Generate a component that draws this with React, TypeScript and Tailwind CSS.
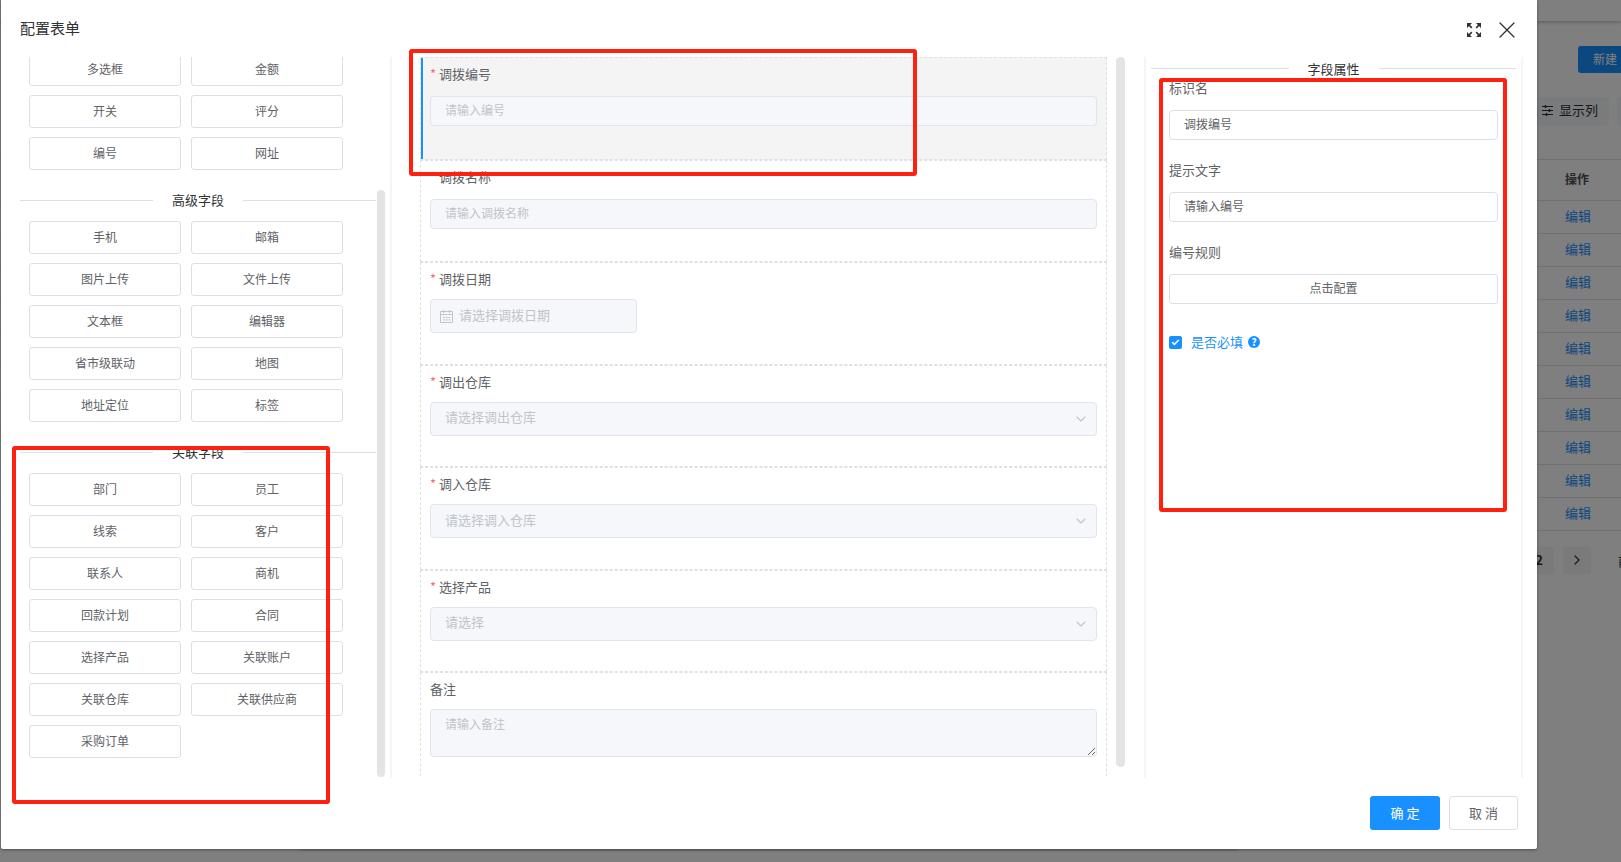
import React from "react";
import { Check, ChevronDown, ChevronRight, X } from "lucide-react";

const basicFields = ["多选框", "金额", "开关", "评分", "编号", "网址"];
const advancedFields = ["手机", "邮箱", "图片上传", "文件上传", "文本框", "编辑器", "省市级联动", "地图", "地址定位", "标签"];
const relatedFields = [
  "部门", "员工", "线索", "客户", "联系人", "商机", "回款计划", "合同",
  "选择产品", "关联账户", "关联仓库", "关联供应商", "采购订单",
];

type Field = { id: string; label: string; kind: "text" | "date" | "select"; placeholder: string; active?: boolean };

const formFields: Field[] = [
  { id: "code", label: "调拨编号", kind: "text", placeholder: "请输入编号", active: true },
  { id: "name", label: "调拨名称", kind: "text", placeholder: "请输入调拨名称" },
  { id: "date", label: "调拨日期", kind: "date", placeholder: "请选择调拨日期" },
  { id: "from", label: "调出仓库", kind: "select", placeholder: "请选择调出仓库" },
  { id: "to", label: "调入仓库", kind: "select", placeholder: "请选择调入仓库" },
  { id: "product", label: "选择产品", kind: "select", placeholder: "请选择" },
];

function Divider({ title, className }: { title: string; className: string }) {
  return (
    <div className={`flex items-center ${className}`}>
      <span className="h-px flex-1 bg-[#dcdfe6]" />
      <h2 className="px-[19px] text-[13px] leading-5 text-[#303133]">{title}</h2>
      <span className="h-px flex-1 bg-[#dcdfe6]" />
    </div>
  );
}

function FieldGrid({ items }: { items: string[] }) {
  return (
    <div className="grid grid-cols-2 gap-x-[10px] gap-y-[9px] pr-[33px] pb-[9px] pl-[9px]">
      {items.map((item) => (
        <button key={item} type="button" className="h-[33px] rounded-[3px] border border-[#dcdfe6] bg-white pb-[2px] text-xs text-[#606266]">
          {item}
        </button>
      ))}
    </div>
  );
}

function CalendarIcon() {
  return (
    <svg viewBox="0 0 13 13" className="absolute left-[10px] size-[13px]" fill="none" stroke="#c0c4cc" aria-hidden="true">
      <path d="M.5 1.500h12v11H.5zM.5 4.500h12M3.500 0v3M9.500 0v3" />
      <path d="M3 7.500h2m.7 0h2m.7 0h2M3 9.900h2m.7 0h2m.7 0h2" />
    </svg>
  );
}

function FormControl({ field }: { field: Field }) {
  const box = "rounded-[4px] border border-[#dfe4ed] bg-[#f5f7fa] pb-[3px] text-[#c0c4cc] placeholder:text-[#c0c4cc]";
  if (field.kind === "select") {
    return (
      <>
        <select id={field.id} disabled className={`h-[34px] w-full appearance-none px-[14px] text-[13px] opacity-100 ${box}`}>
          <option>{field.placeholder}</option>
        </select>
        <ChevronDown className="pointer-events-none absolute right-[8px] size-4 text-[#c0c4cc]" strokeWidth={1.6} />
      </>
    );
  }
  if (field.kind === "date") {
    return (
      <>
        <input id={field.id} disabled placeholder={field.placeholder} className={`h-[34px] w-[207px] pr-3 pl-[28px] text-[13px] ${box}`} />
        <CalendarIcon />
      </>
    );
  }
  return <input id={field.id} disabled placeholder={field.placeholder} className={`h-[30px] w-full px-[14px] text-xs ${box}`} />;
}

function FormItem({ field }: { field: Field }) {
  return (
    <div className={`relative border border-dashed border-[#e0e0e0] px-[9px] ${field.active ? "bg-[#f4f4f4]" : ""}`}>
      {field.active && <span className="absolute inset-y-0 left-0 w-[2px] bg-[#1890ff]" />}
      <label htmlFor={field.id} className="mb-1 flex h-8 items-center text-[13px] text-[#606266]">
        <span className="mr-[3px] text-[#f56c6c]">*</span>
        {field.label}
      </label>
      <div className="relative flex h-[34px] items-center">
        <FormControl field={field} />
      </div>
    </div>
  );
}

function Backdrop() {
  return (
    <div className="absolute inset-0 overflow-hidden bg-white">
      <div className="h-[21px] shadow-[0_1px_4px_rgba(0,0,0,0.3)]" />
      <div className="mt-[25px] flex justify-end">
        <button type="button" className="h-[27px] w-[43px] rounded-l-[3px] bg-[#1890ff] pb-[2px] pl-[15px] text-left text-xs whitespace-nowrap text-white">新建</button>
      </div>
      <div className="mt-6 flex justify-end gap-2">
        <button type="button" className="flex h-7 w-[80px] items-center gap-[6px] rounded-[3px] bg-[#f4f6f9] pb-[2px] pl-[13px] text-[13px] whitespace-nowrap text-[#303133]">
          <svg viewBox="0 0 11 11" className="size-[11px]" fill="none" stroke="#303133" aria-hidden="true">
            <path d="M0 1.500h11M0 5.500h11M0 9.500h11" />
            <path strokeWidth="1.5" d="M3.500 0v3M7.500 4v3M4.500 8v3" />
          </svg>
          显示列
        </button>
        <span className="w-1 rounded-l-[3px] bg-[#f4f6f9]" />
      </div>
      <table className="mt-[34px] w-full border-collapse border-y border-[#e0e3ea] text-left text-[13px]">
        <thead>
          <tr className="h-[41px] border-b border-[#e0e3ea]">
            <th />
            <th className="w-[56px] pb-[2px] text-xs font-bold text-[#505050]">操作</th>
          </tr>
        </thead>
        <tbody>
          {Array.from({ length: 10 }, (_, i) => (
            <tr key={i} className="h-[33px] border-b border-[#e0e3ea]">
              <td />
              <td className="w-[56px] pb-[2px]"><a href="#edit" className="text-[#1890ff]">编辑</a></td>
            </tr>
          ))}
        </tbody>
      </table>
      <div className="mt-4 flex h-[27px] justify-end gap-[9px] text-[13px] text-[#303133]">
        <button type="button" className="w-7 rounded-[2px] bg-[#f4f4f5] pb-[2px] pr-[2px] font-bold">2</button>
        <button type="button" aria-label="下一页" className="flex w-7 items-center justify-center rounded-[2px] bg-[#f4f4f5] pb-[2px]">
          <ChevronRight className="size-4" strokeWidth={1.8} />
        </button>
        <span className="w-[21px] overflow-hidden pl-[18px] leading-[27px] whitespace-nowrap">前</span>
      </div>
    </div>
  );
}

const marker = "pointer-events-none absolute rounded-[3px] border-4 border-[#ff2010]";

export default function App() {
  return (
    <div className="relative min-h-screen overflow-hidden font-['Noto_Sans_CJK_SC',sans-serif]">
      <Backdrop />
      <div className="absolute inset-0 bg-black/50" />
      <div role="dialog" aria-labelledby="dialog-title" className="relative mr-[84px] mb-[13px] ml-px rounded-b-[2px] bg-white shadow-[0_1px_3px_rgba(0,0,0,0.4)]">
        <header className="flex h-[57px] items-center justify-between pr-4 pl-[19px]">
          <h1 id="dialog-title" className="text-[15px] text-[#303133]">配置表单</h1>
          <div className="flex items-center gap-3 pt-[3px]">
            <button type="button" aria-label="全屏">
              <svg viewBox="0 0 14 14" className="size-[14px]" fill="#303133" stroke="#303133" aria-hidden="true">
                <path stroke="none" d="M0 0h5L0 5zM14 0v5L9 0zM0 14V9l5 5zM14 14H9l5-5z" />
                <path strokeWidth="1.7" d="m1.500 1.500 3.300 3.300M12.500 1.500 9.200 4.800M1.500 12.500l3.300-3.300M12.500 12.500 9.200 9.200" />
              </svg>
            </button>
            <button type="button" aria-label="关闭">
              <X className="size-7 text-[#303133]" strokeWidth={1.1} />
            </button>
          </div>
        </header>

        <div className="flex h-[calc(100vh-141px)] pr-[14px] pl-[19px]">
          <aside className="flex w-[372px] shrink-0 overflow-hidden border-r-2 border-[#f5f5f5]">
            <div className="-mt-1 w-[356px] shrink-0">
              <FieldGrid items={basicFields} />
              <Divider title="高级字段" className="h-[42px]" />
              <FieldGrid items={advancedFields} />
              <Divider title="关联字段" className="h-[42px]" />
              <FieldGrid items={relatedFields} />
            </div>
            <span className="mt-[133px] mb-px ml-px w-2 rounded-full bg-[#e4e4e4]" />
          </aside>

          <main className="flex min-w-0 flex-1 gap-[9px] overflow-hidden pr-[19px] pl-7">
            <form className="min-w-0 flex-1">
              <div className="grid h-[615px] auto-rows-fr">
                {formFields.map((field) => (
                  <FormItem key={field.id} field={field} />
                ))}
              </div>
              <div className="h-[140px] border border-dashed border-[#e0e0e0] px-[9px]">
                <label htmlFor="remark" className="mb-1 flex h-8 items-center text-[13px] text-[#606266]">备注</label>
                <textarea
                  id="remark"
                  disabled
                  placeholder="请输入备注"
                  className="block h-12 w-full resize rounded-[4px] border border-[#dfe4ed] bg-[#f5f7fa] px-[14px] py-[5px] text-xs leading-[18px] placeholder:text-[#c0c4cc]"
                />
              </div>
            </form>
            <span className="mb-[11px] w-[9px] rounded-full bg-[#e4e4e4]" />
          </main>

          <aside className="w-[379px] shrink-0 border-x-2 border-[#f5f5f5] px-[5px]">
            <Divider title="字段属性" className="h-[23px]" />
            <div className="px-[18px] text-[13px] text-[#606266]">
              <label htmlFor="prop-name" className="flex h-[30px] items-start leading-4">标识名</label>
              <input id="prop-name" defaultValue="调拨编号" className="mb-[22px] block h-[30px] w-full rounded-[4px] border border-[#dcdfe6] px-[14px] pb-[3px] text-xs" />
              <label htmlFor="prop-hint" className="flex h-[30px] items-start leading-4">提示文字</label>
              <input id="prop-hint" defaultValue="请输入编号" className="mb-[22px] block h-[30px] w-full rounded-[4px] border border-[#dcdfe6] px-[14px] pb-[3px] text-xs" />
              <label htmlFor="prop-rule" className="flex h-[30px] items-start leading-4">编号规则</label>
              <button id="prop-rule" type="button" className="mb-7 block h-[30px] w-full rounded-[3px] border border-[#dcdfe6] pb-[2px] text-xs">点击配置</button>
              <label className="flex h-5 items-center text-[#1890ff]">
                <span className="relative mr-[9px] flex size-[13px]">
                  <input type="checkbox" defaultChecked className="size-[13px] appearance-none rounded-[2px] bg-[#1890ff]" />
                  <Check className="pointer-events-none absolute top-[2px] left-[2px] size-[9px] text-white" strokeWidth={4} />
                </span>
                是否必填
                <span className="ml-[5px] flex size-3 items-center justify-center rounded-full bg-[#1890ff] text-[10px] leading-3 font-bold text-white">?</span>
              </label>
            </div>
          </aside>
        </div>

        <footer className="flex h-[71px] items-start justify-end gap-[9px] pt-[18px] pr-[19px] text-[13px]">
          <button type="button" className="h-[34px] w-[70px] rounded-[3px] bg-[#1890ff] text-white">确 定</button>
          <button type="button" className="h-[34px] w-[69px] rounded-[3px] border border-[#dcdfe6] text-[#606266]">取 消</button>
        </footer>

        <span className="absolute top-full right-[299px] left-[299px] h-[2px] rounded-b-[2px] bg-[#555555] opacity-60" />

        <div className={`${marker} top-[446px] left-[11px] h-[358px] w-[318px]`} />
        <div className={`${marker} top-[49px] left-[408px] h-[127px] w-[508px]`} />
        <div className={`${marker} top-[78px] right-[30px] h-[434px] w-[348px]`} />
      </div>
    </div>
  );
}
